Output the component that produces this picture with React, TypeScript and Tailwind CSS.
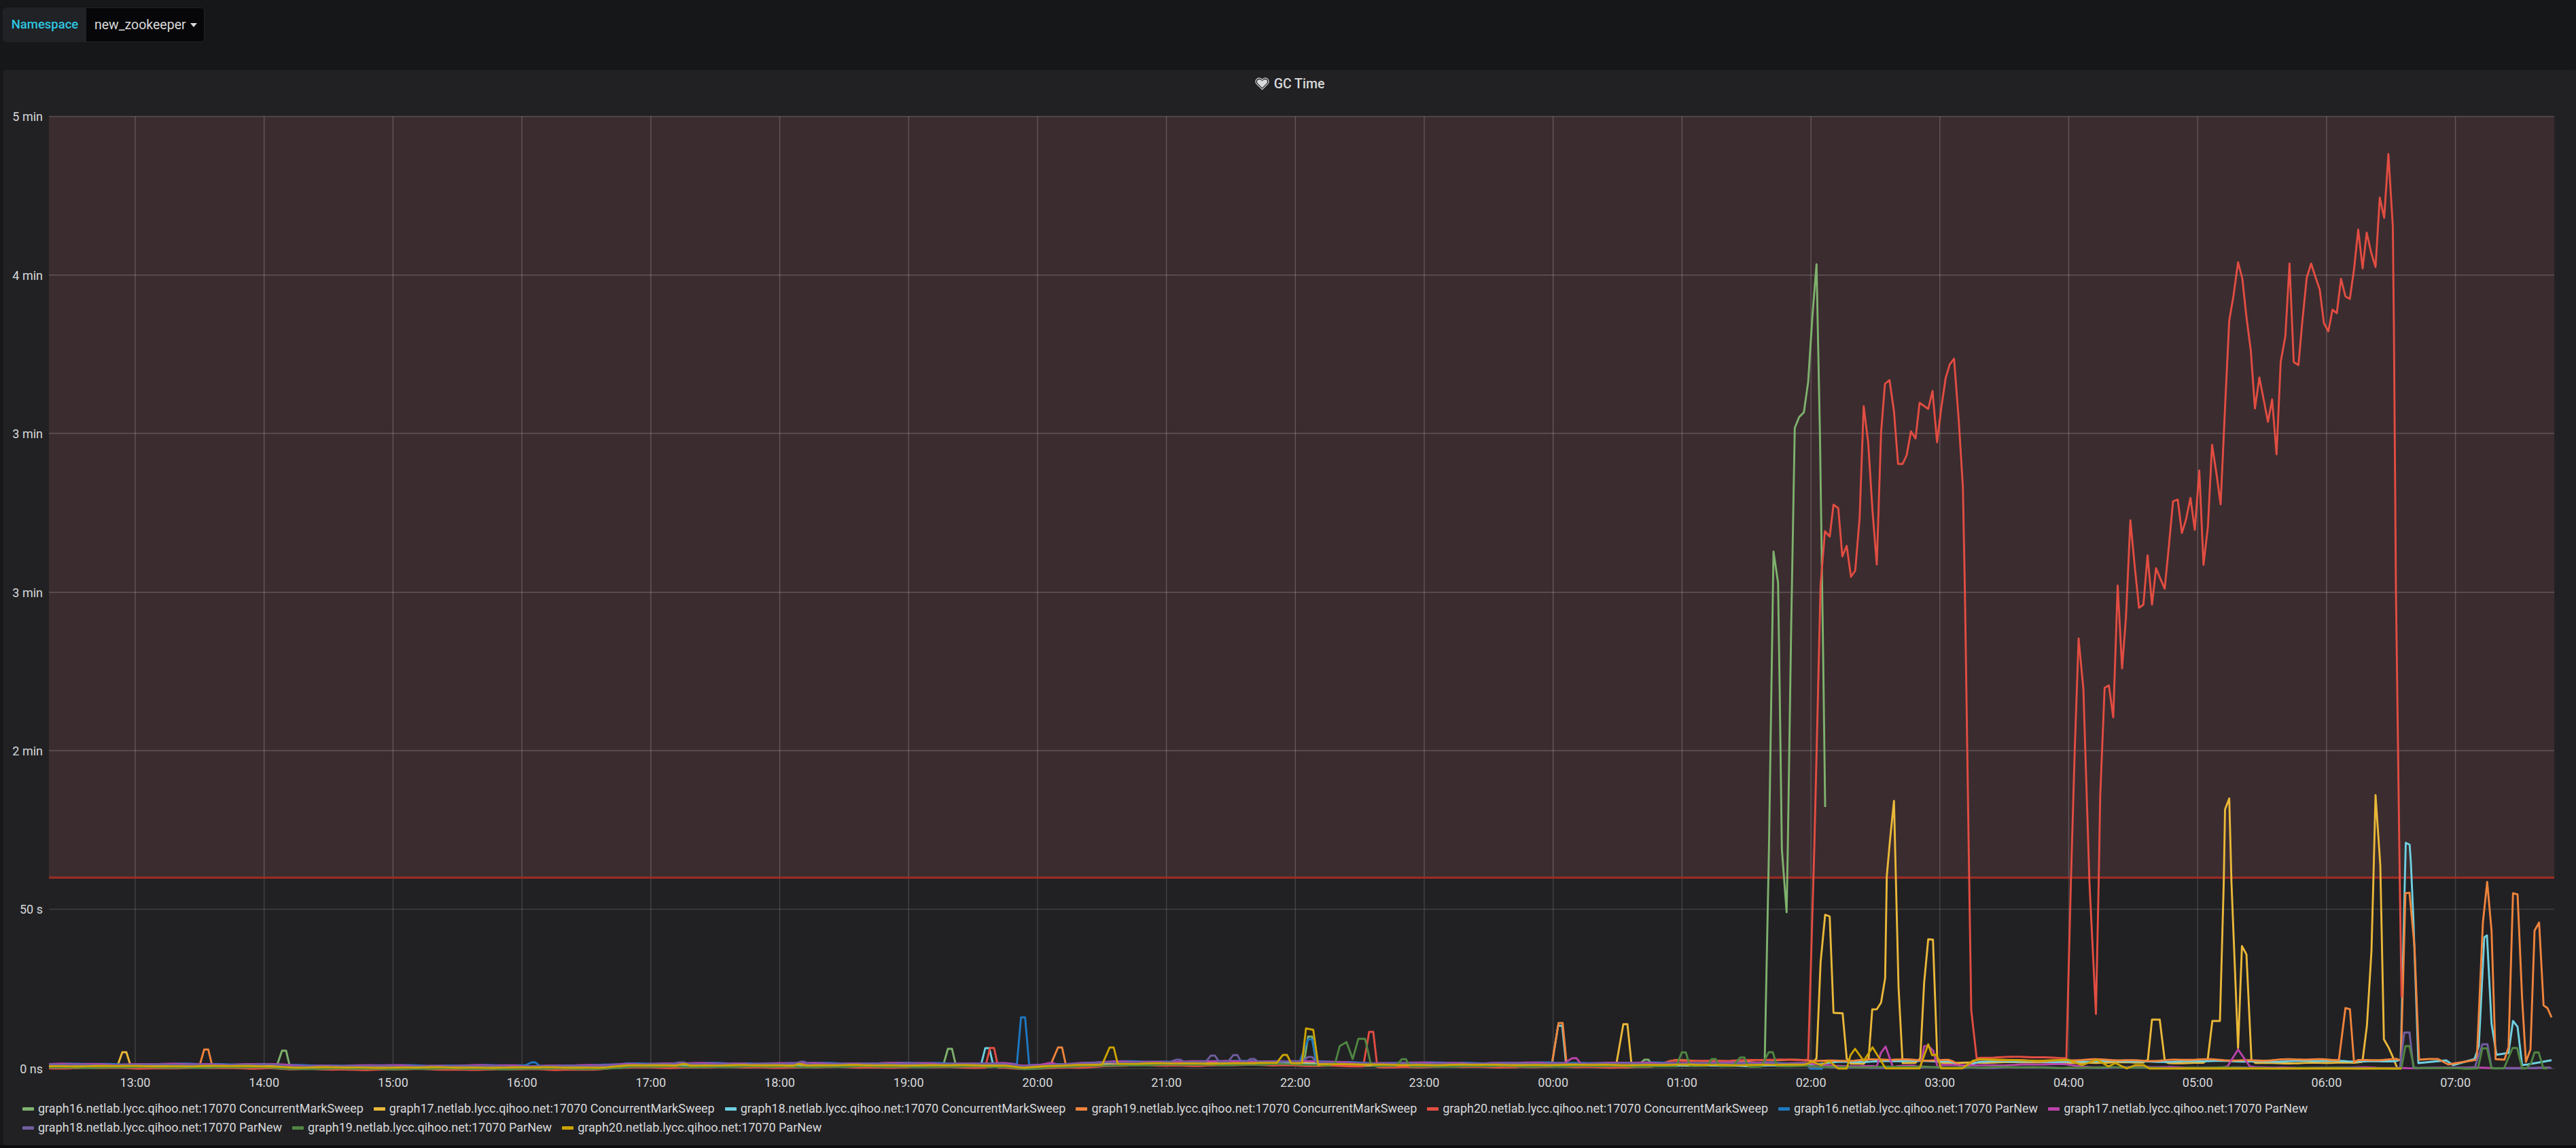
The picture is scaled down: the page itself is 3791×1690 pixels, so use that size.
type Pt = [number, number];

const STEP = 6.32;

const lerp = (knots: Pt[], x: number) => {
  if (x <= knots[0][0]) return knots[0][1];
  for (let i = 1; i < knots.length; i++) {
    if (x <= knots[i][0]) {
      const [x0, y0] = knots[i - 1];
      const [x1, y1] = knots[i];
      return y0 + ((y1 - y0) * (x - x0)) / (x1 - x0);
    }
  }
  return knots[knots.length - 1][1];
};

// shared floor of the band along the bottom of the chart
const floor: Pt[] = [
  [72, 1569.5], [400, 1569.5], [430, 1571.5], [880, 1571.5], [930, 1568.5], [1340, 1568.2], [1480, 1568.5],
  [1505, 1571.5], [1550, 1569.5], [1640, 1566], [1900, 1565], [2020, 1567.7], [2660, 1567.7],
];

const level = (knots: Pt[], seed: number, amp = 0.5) => (x: number) =>
  lerp(knots, x) + Math.sin(x * 0.041 + seed) * amp + Math.sin(x * 0.113 + seed * 2) * amp * 0.6;

const shifted = (off: number, tail: Pt[] = []): Pt[] => [...floor.map(([x, y]): Pt => [x, y + off]), ...tail];

const bump = (cx: number, top: number): Pt[] => [[cx - 3, top], [cx + 3, top]];

// baseline samples between the drawn spikes
const trace = (lv: (x: number) => number, from: number, to: number, chunks: Pt[][]) => {
  const out: Pt[] = [];
  let cur = from;
  for (const chunk of chunks) {
    for (let x = cur; x <= chunk[0][0] - 6; x += STEP) out.push([x, lv(x)]);
    out.push(...chunk);
    cur = chunk[chunk.length - 1][0] + 6;
  }
  for (let x = cur; x <= to; x += STEP) out.push([x, lv(x)]);
  return out;
};

const redMain: Pt[] = [
  [2661, 1560], [2670, 1250], [2679.3, 861], [2685.7, 782], [2692.7, 790], [2698.3, 743], [2705.3, 748], [2711.3, 819],
  [2717.7, 803.5], [2724, 849], [2730.3, 840], [2736.7, 763], [2742.7, 598], [2749.3, 651], [2755.7, 752], [2762, 831],
  [2768.3, 637], [2774, 565], [2780.7, 559.5], [2787.3, 605.5], [2793.3, 683], [2800, 683], [2806, 670], [2812.3, 635],
  [2819, 645.6], [2825, 593], [2837.7, 602], [2844, 575.6], [2850.7, 651], [2856.7, 602], [2863.3, 556.7], [2869.3, 536.6],
  [2875.7, 528], [2882.7, 620], [2888.7, 717], [2891.7, 872], [2897.3, 1250], [2901, 1487], [2909, 1558],
];

const redLate: Pt[] = [
  [3041, 1558], [3047.6, 1300], [3053.3, 1105], [3059, 940], [3066, 1014], [3075, 1300], [3084.5, 1492.7], [3088.5, 1300],
  [3090.8, 1172], [3097.3, 1012.6], [3103.5, 1009], [3110, 1056], [3116.5, 862], [3123, 984], [3128.7, 909], [3135.2, 766],
  [3141.4, 831.6], [3147.9, 894.7], [3154.4, 890], [3160.5, 817.5], [3167, 890], [3173, 836.5], [3179.6, 852.6],
  [3185.7, 866.7], [3191.9, 803.5], [3198, 738], [3204.9, 735.4], [3211, 784.6], [3217, 765], [3223.6, 733], [3230, 780],
  [3236.6, 692.6], [3242.8, 831.6], [3249.3, 775.4], [3255.4, 654.7], [3262, 698], [3268, 742.5], [3274.5, 600], [3280.7, 472],
  [3287, 435], [3293.7, 386], [3300, 410.5], [3306, 466.7], [3312.4, 515.8], [3318.5, 601.4], [3325, 555.8], [3331.6, 589.5],
  [3337.7, 621], [3343.8, 588], [3350.3, 668.8], [3356.4, 533], [3363.3, 494.7], [3369.4, 388], [3375.6, 533], [3382.5, 537.5],
  [3388.2, 473.7], [3394.7, 409], [3401.2, 388], [3407.3, 407], [3413.8, 426], [3420, 475.8], [3426.5, 487.7], [3432.6, 456],
  [3439, 461], [3445.2, 410.5], [3451.7, 436.5], [3458.2, 440], [3464.3, 396.5], [3470.5, 338], [3477, 395], [3483, 342.5],
  [3489.6, 372], [3496, 393], [3502.2, 291], [3508.7, 320.7], [3514.9, 226.7], [3521.4, 333], [3523, 480], [3526, 867],
  [3531.7, 1300], [3534.3, 1468],
];

const greenMain: Pt[] = [
  [2597, 1565], [2603.3, 1250], [2610, 812], [2616.7, 858], [2619, 1010], [2622.3, 1250], [2629.3, 1343], [2631, 1250],
  [2636, 924], [2641.3, 630], [2647.7, 614], [2654.7, 607], [2661, 562.4], [2667.3, 465], [2673.3, 389], [2678.3, 637],
  [2683.3, 981.5], [2686, 1188],
];

const yellowPeaks: Pt[][] = [
  [[180, 1549], [186, 1549]],
  [[2389, 1507.7], [2395, 1507.7]],
  [[2673.3, 1558], [2679.3, 1416.7], [2686, 1346.7], [2692.7, 1349], [2698.3, 1491], [2711.7, 1491.7], [2717.7, 1558]],
  [[2750, 1558], [2755.3, 1486], [2762, 1485.7], [2768.3, 1476], [2774.3, 1440], [2776.7, 1290], [2781.6, 1235], [2787.3, 1179], [2790, 1290], [2794, 1453], [2800, 1565]],
  [[2826, 1558], [2831.7, 1446.7], [2837.7, 1382.7], [2844.7, 1383.3], [2851, 1558]],
  [[3161, 1560], [3167, 1501], [3178.4, 1501], [3186, 1563]],
  [[3249, 1560], [3255.8, 1503], [3267, 1503], [3272.6, 1300], [3274.5, 1191.6], [3280.7, 1175.4], [3284, 1300], [3293.7, 1543], [3299.4, 1392.7], [3306, 1405], [3313.4, 1560.7]],
  [[3476.7, 1563], [3483.3, 1510], [3490, 1400], [3492.7, 1300], [3496, 1170.5], [3503, 1273.7], [3508.3, 1530], [3515, 1541.7], [3521.7, 1556.7], [3527.7, 1571.7]],
];

const orangeLate: Pt[] = [
  [3533.3, 1561.7], [3540, 1315], [3546, 1314.3], [3553.3, 1393.3], [3560, 1560], [3575, 1559], [3588, 1559], [3603, 1567], [3645, 1560],
  [3654, 1358], [3660.3, 1298.3], [3666.7, 1370], [3672.7, 1559.3], [3685.7, 1560], [3691.7, 1541.7], [3698.3, 1315], [3705, 1316.7],
  [3711.7, 1470], [3717.3, 1563.3], [3724, 1545], [3730, 1370], [3736.7, 1358], [3743.3, 1480], [3749, 1484], [3755, 1497.7],
];

const cyanLate: Pt[] = [
  [3533, 1560], [3539, 1300], [3540.5, 1240.7], [3546.2, 1243.5], [3548, 1270], [3551.7, 1353], [3559, 1565], [3600, 1561], [3610, 1568],
  [3641.7, 1559], [3648, 1540], [3656, 1380], [3660, 1377], [3666.7, 1507], [3674, 1552.7], [3691.7, 1550], [3698.3, 1503], [3705, 1511.7],
  [3711.7, 1568], [3720, 1567], [3755, 1560.7],
];

const goldLate: Pt[] = [
  [2660, 1566], [2666.7, 1562.7], [2680, 1568], [2691.7, 1561.7], [2705, 1573], [2717.7, 1573], [2723.3, 1553.3], [2730, 1544],
  [2742.7, 1561.7], [2755.7, 1541.7], [2775, 1572.7], [2825, 1572.7], [2837.7, 1537.3], [2843.3, 1553.3], [2850, 1552.7], [2856.7, 1572.7],
  [2888.3, 1572.7], [2903.3, 1561.7], [2913.3, 1559.3], [3000, 1561.7], [3043, 1560], [3064, 1568], [3086, 1560], [3103, 1570], [3113, 1565],
  [3130, 1573], [3142, 1568], [3155, 1568], [3163, 1573], [3534, 1573],
];

const series = [
  {
    name: 'graph16.netlab.lycc.qihoo.net:17070 ConcurrentMarkSweep',
    color: '#7eb26d',
    points: trace(level(shifted(1), 1), 72, 2686, [bump(418, 1546.7), bump(1398, 1544), bump(1928, 1526), bump(2423, 1560), greenMain]),
  },
  {
    name: 'graph17.netlab.lycc.qihoo.net:17070 ConcurrentMarkSweep',
    color: '#eab839',
    points: trace(level(shifted(-1, [[2700, 1566], [2910, 1564], [3500, 1565]]), 2), 72, 3528, yellowPeaks),
  },
  {
    name: 'graph18.netlab.lycc.qihoo.net:17070 ConcurrentMarkSweep',
    color: '#6ed0e0',
    points: trace(level(shifted(1, [[2700, 1563], [2870, 1562], [2890, 1571], [2910, 1563], [3533, 1562]]), 3), 72, 3533, [bump(1453, 1543), bump(2296, 1510), cyanLate]),
  },
  {
    name: 'graph19.netlab.lycc.qihoo.net:17070 ConcurrentMarkSweep',
    color: '#ef843c',
    points: trace(level([...shifted(1.5).slice(0, -1), [2430, 1570], [2460, 1562], [2870, 1560], [2890, 1570], [2908, 1561], [3533, 1560]], 4, 0.9), 72, 3533, [
      bump(303.5, 1545), bump(1560, 1542), bump(2296.7, 1506), [[3442, 1560.7], [3451.7, 1484], [3458.3, 1485.7], [3464.3, 1563.3]], orangeLate,
    ]),
  },
  {
    name: 'graph20.netlab.lycc.qihoo.net:17070 ConcurrentMarkSweep',
    color: '#e24d42',
    points: trace(level([...shifted(3).slice(0, -1), [2430, 1571], [2460, 1562], [2661, 1560], [2909, 1558], [2973, 1555], [3041, 1558]], 5), 72, 3534, [
      bump(1460, 1542.7), bump(2018, 1519), redMain, redLate,
    ]),
  },
  {
    name: 'graph16.netlab.lycc.qihoo.net:17070 ParNew',
    color: '#1f78c1',
    points: trace(level(shifted(-3, [[2630, 1566], [2650, 1573]]), 6), 72, 2686, [bump(785, 1564), bump(925, 1565.5), bump(1505.6, 1497.7), bump(1928, 1530)]),
  },
  {
    name: 'graph17.netlab.lycc.qihoo.net:17070 ParNew',
    color: '#ba43a9',
    points: trace(level(shifted(-2.8, [[2700, 1570], [2905, 1568], [3040, 1567], [3080, 1571], [3534, 1572]]), 7), 72, 3755, [
      bump(1547, 1565), bump(2317, 1557.7),
      [[2762, 1570], [2768, 1550], [2775, 1540.7], [2786, 1571.7]],
      [[2826.7, 1571.7], [2831.7, 1540], [2838.3, 1540], [2845, 1546.7], [2851.7, 1571.7]],
      [[3278, 1570], [3293.7, 1545], [3311, 1570]],
    ]),
  },
  {
    name: 'graph18.netlab.lycc.qihoo.net:17070 ParNew',
    color: '#705da0',
    points: trace(level(shifted(-2, [[2660, 1571.5], [3755, 1572.5]]), 8), 72, 3755, [
      bump(1003, 1564), bump(1181, 1563), bump(1733.7, 1560), bump(1785, 1554), bump(1818, 1553.3), bump(1843, 1559), bump(1928, 1556),
      [[3532, 1571.7], [3538.3, 1520], [3546, 1520], [3551.7, 1571.7]],
      [[3642, 1571.7], [3653.3, 1537.3], [3660.7, 1537.3], [3666.7, 1571.7]],
    ]),
  },
  {
    name: 'graph19.netlab.lycc.qihoo.net:17070 ParNew',
    color: '#508642',
    points: trace(level(shifted(2, [[2660, 1570.5], [3534, 1572.7]]), 9), 72, 3755, [
      [[1965, 1565], [1971.6, 1540], [1981.6, 1534], [1990.7, 1559], [1999, 1529.3], [2009, 1529.3], [2017, 1565]],
      bump(2066, 1559.3), bump(2478, 1549.3), bump(2522, 1559), bump(2564, 1556.7), bump(2606, 1549),
      [[3534, 1572.7], [3540, 1540], [3546, 1540], [3552.7, 1571.7]],
      [[3646.7, 1572.7], [3653.3, 1543.3], [3660, 1543.3], [3666.7, 1572.7], [3685, 1572.7], [3697.7, 1542.7], [3704.3, 1542.7], [3711.7, 1572.7], [3718, 1572.7], [3724.5, 1566], [3730, 1549.3], [3736, 1549.3], [3743, 1572.7]],
    ]),
  },
  {
    name: 'graph20.netlab.lycc.qihoo.net:17070 ParNew',
    color: '#cca300',
    points: trace(level(shifted(0), 10, 0.35), 72, 2650, [
      bump(1007, 1566.5), bump(1177, 1566.5), bump(1636, 1542), bump(1891, 1553),
      [[1916, 1565], [1922, 1514], [1932.7, 1516], [1940, 1568]],
      goldLate,
    ]),
  },
];

const hours = ['13:00', '14:00', '15:00', '16:00', '17:00', '18:00', '19:00', '20:00', '21:00', '22:00', '23:00', '00:00', '01:00', '02:00', '03:00', '04:00', '05:00', '06:00', '07:00'];
const yTicks: [string, number][] = [['5 min', 171.5], ['4 min', 405], ['3 min', 638], ['3 min', 872], ['2 min', 1105], ['50 s', 1338.5], ['0 ns', 1573]];

const PLOT_LEFT = 72;
const PLOT_RIGHT = 3759;
const LIMIT_Y = 1292;

function Chart() {
  return (
    <svg viewBox="5 144 3786 1466" className="block w-full h-[1466px]">
      <rect x={PLOT_LEFT} y={171.5} width={PLOT_RIGHT - PLOT_LEFT} height={LIMIT_Y - 171.5} fill="#3b2c2f" />
      {yTicks.map(([label, y], i) => (
        <g key={i}>
          <line x1={PLOT_LEFT} x2={PLOT_RIGHT} y1={y} y2={y} stroke="#ffffff" strokeOpacity={y < LIMIT_Y ? 0.2 : 0.14} strokeWidth={1.6} />
          <text x={63} y={y + 6.5} textAnchor="end" fontSize={18} fill="#d8d9da">{label}</text>
        </g>
      ))}
      {hours.map((label, i) => {
        const x = 199 + 189.7 * i;
        return (
          <g key={label}>
            <line x1={x} x2={x} y1={171.5} y2={LIMIT_Y} stroke="#ffffff" strokeOpacity={0.2} strokeWidth={1.4} />
            <line x1={x} x2={x} y1={LIMIT_Y} y2={1573} stroke="#ffffff" strokeOpacity={0.15} strokeWidth={1.4} />
            <text x={x} y={1599.5} textAnchor="middle" fontSize={18} fill="#d8d9da">{label}</text>
          </g>
        );
      })}
      <line x1={PLOT_LEFT} x2={PLOT_RIGHT} y1={LIMIT_Y} y2={LIMIT_Y} stroke="#a32c22" strokeWidth={2.8} />
      {series.map((s) => (
        <polyline
          key={s.name}
          points={s.points.map(([x, y]) => `${x.toFixed(1)},${y.toFixed(1)}`).join(' ')}
          fill="none"
          stroke={s.color}
          strokeWidth={2.9}
          strokeLinejoin="round"
        />
      ))}
    </svg>
  );
}

export default function App() {
  return (
    <div className="w-[3791px] h-[1690px] bg-[#161719] flex flex-col overflow-hidden font-['Roboto',sans-serif] text-[#d8d9da]">
      <div className="h-[103px] shrink-0 pt-[11px] pl-[4px]">
        <div className="flex w-[297px] h-[51px] rounded-[5px] overflow-hidden border border-[#222327]">
          <div className="w-[122px] flex items-center justify-center bg-[#202226] text-[#2fc6e0] text-[18.5px] font-medium">Namespace</div>
          <div className="flex-1 flex items-center pl-[12px] gap-[6px] bg-[#070709] text-[19.5px]">
            <span>new_zookeeper</span>
            <span className="w-0 h-0 border-x-[5.5px] border-t-[6px] border-x-transparent border-t-[#d8d9da]" />
          </div>
        </div>
      </div>

      <div className="flex-1 ml-[5px] rounded-[3px] bg-[#212124] flex flex-col">
        <div className="h-[41px] shrink-0 flex items-center justify-center gap-[7px] text-[19.5px] font-medium">
          <svg width="21" height="19" viewBox="0 0 21 19">
            <path d="M10.5 17.6 L2.4 9.6 C0.2 7.3 0.6 3.6 3 2 C5.5 0.4 8.6 1.1 10.5 3.6 C12.4 1.1 15.5 0.4 18 2 C20.4 3.6 20.8 7.3 18.6 9.6 Z" fill="none" stroke="#d8d9da" strokeWidth="1.2" />
            <path d="M10.5 15.2 L3.9 8.7 C2.4 7 2.7 4.6 4.3 3.6 C6.2 2.5 8.8 3.2 10.5 5.6 C12.2 3.2 14.8 2.5 16.7 3.6 C18.3 4.6 18.6 7 17.1 8.7 Z" fill="#d8d9da" />
          </svg>
          <span>GC Time</span>
        </div>
        <Chart />
        <div className="flex flex-wrap pl-[28px] pt-[8px] text-[18px] leading-[28px]">
          {series.map((s) => (
            <div key={s.name} className="flex items-center mr-[15px]">
              <span className="w-[17px] h-[5px] rounded-[1px] mr-[6px]" style={{ backgroundColor: s.color }} />
              <span>{s.name}</span>
            </div>
          ))}
        </div>
      </div>
      <div className="h-[4px] shrink-0 bg-[#0d0d0f]" />
    </div>
  );
}
